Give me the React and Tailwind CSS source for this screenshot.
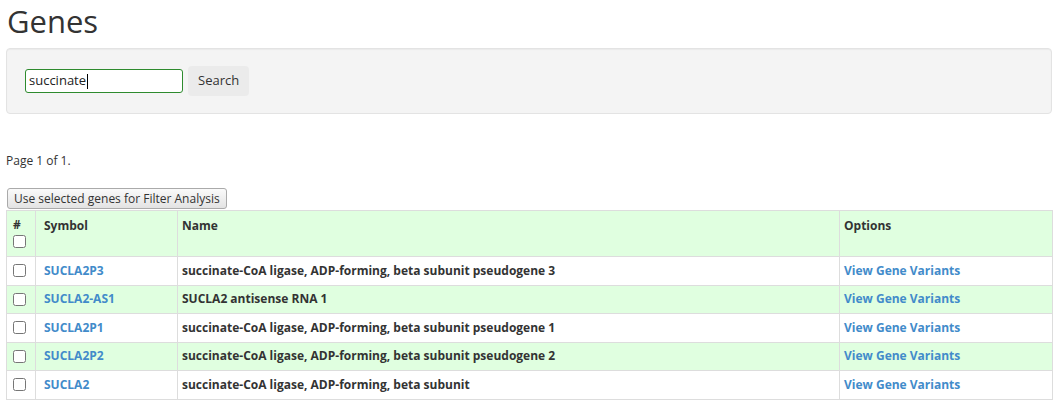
const genes = [
  { symbol: "SUCLA2P3", name: "succinate-CoA ligase, ADP-forming, beta subunit pseudogene 3" },
  { symbol: "SUCLA2-AS1", name: "SUCLA2 antisense RNA 1" },
  { symbol: "SUCLA2P1", name: "succinate-CoA ligase, ADP-forming, beta subunit pseudogene 1" },
  { symbol: "SUCLA2P2", name: "succinate-CoA ligase, ADP-forming, beta subunit pseudogene 2" },
  { symbol: "SUCLA2", name: "succinate-CoA ligase, ADP-forming, beta subunit" },
];

function Check() {
  return <input type="checkbox" className="w-[13px] h-[13px] m-0 align-middle accent-gray-500" />;
}

export default function App() {
  return (
    <div className="bg-white min-h-[407px] px-[6px] text-[#333] text-[12px]" style={{ fontFamily: '"Open Sans", "DejaVu Sans", sans-serif' }}>
      <h1 className="text-[31px] leading-[42px] pl-[1px] font-normal">Genes</h1>

      <div className="mt-[6px] h-[66px] bg-[#f4f4f4] border border-[#e3e3e3] rounded-[4px] flex items-center pl-[18px] gap-[5px] shadow-[inset_0_1px_1px_rgba(0,0,0,0.04)]">
        <div className="w-[158px] h-[24px] border border-[#2e8b2e] rounded-[3px] bg-white flex items-center pl-[3px] text-[13px] text-[#222]">
          succinate<span className="w-px h-[15px] bg-black ml-px" />
        </div>
        <button className="h-[30px] px-[10px] bg-[#ebebeb] rounded-[4px] text-[13px] text-[#333]">Search</button>
      </div>

      <p className="mt-[38px] text-[12px] leading-[17px]">Page 1 of 1.</p>

      <div className="mt-[19px] mb-[1px] h-[21px]">
        <button className="h-[21px] px-[6px] ml-px border border-[#aaa] rounded-[3px] bg-gradient-to-b from-[#fafafa] to-[#e3e3e3] text-[12px] leading-[18px] text-[#333]">
          Use selected genes for Filter Analysis
        </button>
      </div>

      <table className="w-[1047px] border-collapse border border-[#ddd] font-bold text-[12px]">
        <thead>
          <tr className="bg-[#e0ffe0] h-[46px] align-top">
            <th className="w-[29px] border border-[#ddd] text-left pl-[6px] pt-[6px] font-bold">
              <div className="leading-[15px]">#</div>
              <Check />
            </th>
            <th className="w-[142px] border border-[#ddd] text-left pl-[8px] pt-[6px] font-bold">Symbol</th>
            <th className="w-[662px] border border-[#ddd] text-left pl-[4px] pt-[6px] font-bold">Name</th>
            <th className="border border-[#ddd] text-left pl-[4px] pt-[6px] font-bold">Options</th>
          </tr>
        </thead>
        <tbody>
          {genes.map((g, i) => (
            <tr key={g.symbol} className={i % 2 ? "bg-[#e0ffe0] h-[28.5px]" : "bg-white h-[28.5px]"}>
              <td className="border border-[#ddd] pl-[6px] pb-[2px]"><Check /></td>
              <td className="border border-[#ddd] pl-[8px] text-[#428bca]">{g.symbol}</td>
              <td className="border border-[#ddd] pl-[4px]">{g.name}</td>
              <td className="border border-[#ddd] pl-[4px] text-[#428bca]">View Gene Variants</td>
            </tr>
          ))}
        </tbody>
      </table>
    </div>
  );
}
